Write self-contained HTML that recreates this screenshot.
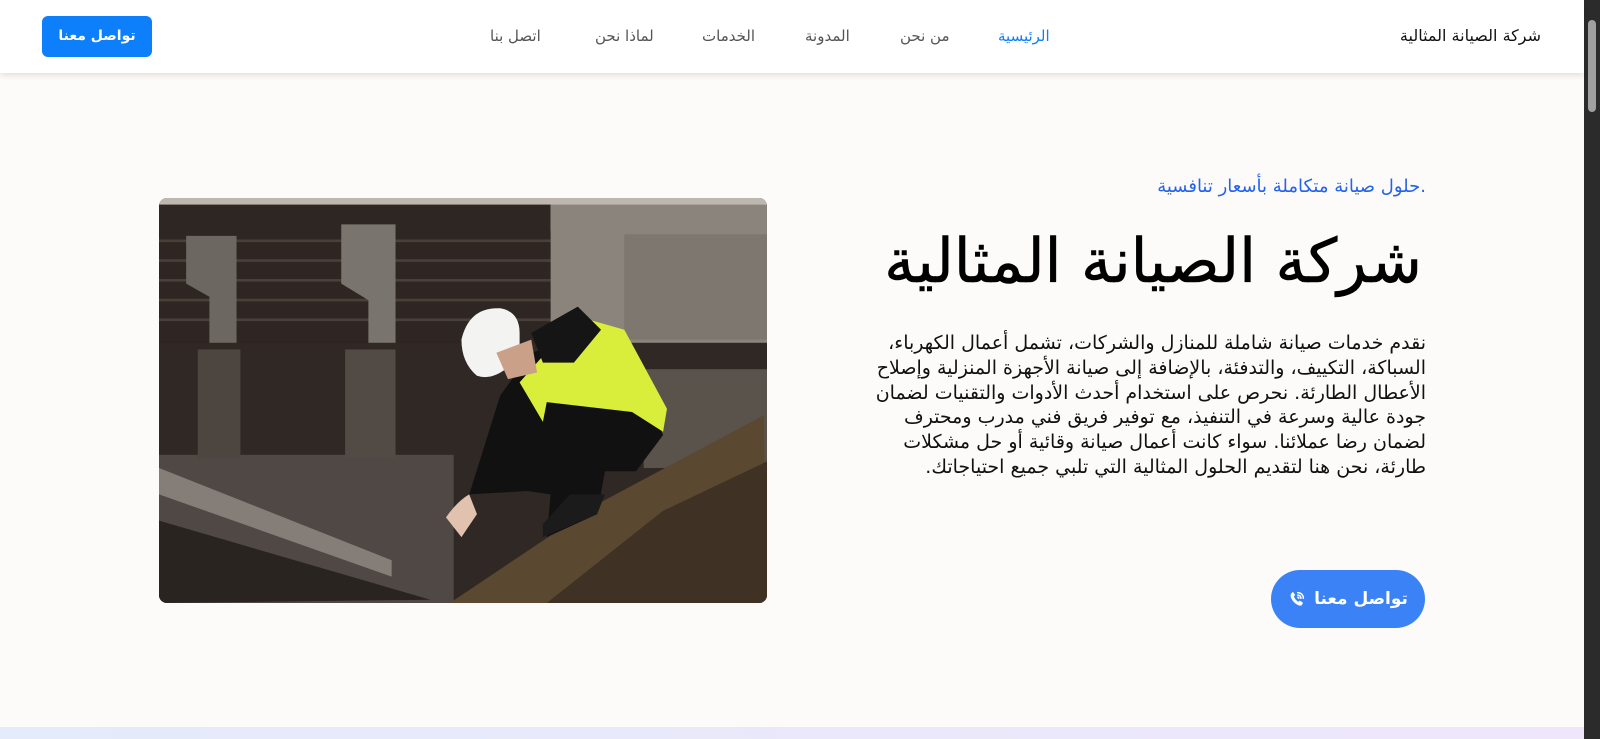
<!DOCTYPE html>
<html dir="rtl"><head><meta charset="utf-8"><style>
*{margin:0;padding:0;box-sizing:border-box}
html,body{width:1600px;height:739px;overflow:hidden}
body{font-family:"DejaVu Sans",sans-serif;background:#fdfbf9;position:relative}
.sb{position:absolute;left:1584px;top:0;width:16px;height:739px;background:#2b2b2b}
.sb i{position:absolute;left:4px;top:20px;width:8px;height:92px;background:#a0a0a0;border-radius:4px}
nav{position:absolute;left:0;top:0;width:1584px;height:73px;background:#fff;box-shadow:0 2px 6px rgba(0,0,0,.12);z-index:2}
.brand{position:absolute;right:43px;top:26px;font-size:16px;color:#111}
.lnk{position:absolute;top:27px;font-size:15px;color:#555;white-space:nowrap}
.nbtn{position:absolute;left:42px;top:16px;width:110px;height:41px;background:#0d7ffb;border-radius:6px;color:#fff;font-size:14px;font-weight:bold;text-align:center;line-height:41px}
.img{position:absolute;left:159px;top:198px;width:608px;height:405px;border-radius:8px;overflow:hidden}
.tag{position:absolute;right:174px;top:176px;color:#2563eb;font-size:18px}
h1{position:absolute;right:178px;top:226px;font-size:61px;font-weight:normal;color:#000;white-space:nowrap;-webkit-text-stroke:0.6px #000}
p{position:absolute;right:174px;top:331px;width:572px;font-size:19px;line-height:24.8px;color:#111;text-align:right}
.cta{position:absolute;left:1271px;top:570px;width:154px;height:58px;border-radius:29px;background:#3b82f6;color:#fff;font-size:17px;font-weight:bold;display:flex;align-items:center;justify-content:center;gap:8px}
.strip{position:absolute;left:0;top:727px;width:1584px;height:12px;background:linear-gradient(90deg,#e4ebfa,#efe6fb)}
</style></head><body>
<nav>
<div class="brand">شركة الصيانة المثالية</div>
<div class="lnk" style="left:998px;color:#0d7ffb">الرئيسية</div>
<div class="lnk" style="left:900px">من نحن</div>
<div class="lnk" style="left:805px">المدونة</div>
<div class="lnk" style="left:702px">الخدمات</div>
<div class="lnk" style="left:595px">لماذا نحن</div>
<div class="lnk" style="left:490px">اتصل بنا</div>
<div class="nbtn">تواصل معنا</div>
</nav>
<div class="img"><svg width="608" height="405" viewBox="0 0 1568 1230" preserveAspectRatio="none">
<rect width="1568" height="1230" fill="#2a2320"/>
<rect x="0" y="0" width="1568" height="100" fill="#bdb7b0"/>
<rect x="0" y="20" width="1010" height="420" fill="#2e2622"/>
<g stroke="#4a403a" stroke-width="8">
<line x1="0" y1="130" x2="1010" y2="130"/><line x1="0" y1="190" x2="1010" y2="190"/><line x1="0" y1="250" x2="1010" y2="250"/><line x1="0" y1="310" x2="1010" y2="310"/><line x1="0" y1="370" x2="1010" y2="370"/></g>
<path d="M70 115 L200 115 L200 440 L130 440 L130 300 L70 260Z" fill="#6d6761"/>
<path d="M470 80 L610 80 L610 440 L540 440 L540 310 L470 260Z" fill="#7a746e"/>
<path d="M1010 20 L1568 20 L1568 440 L1010 440Z" fill="#8a847c"/>
<rect x="1200" y="110" width="368" height="320" fill="#7d776f"/>
<rect x="0" y="440" width="1568" height="790" fill="#2f2824"/>
<rect x="0" y="780" width="760" height="450" fill="#4f4844"/>
<path d="M0 820 L600 1100 L600 1150 L0 900Z" fill="#857e78"/>
<path d="M0 980 L700 1220 L0 1230Z" fill="#2a2420"/>
<rect x="100" y="460" width="110" height="330" fill="#4c4540"/>
<rect x="480" y="460" width="130" height="330" fill="#524b45"/>
<rect x="1250" y="520" width="318" height="300" fill="#5a534c"/>
<path d="M750 1230 L1130 930 L1560 660 L1568 1230Z" fill="#5a4830"/>
<path d="M1000 1230 L1300 950 L1568 800 L1568 1230Z" fill="#3f3224"/>
<path d="M800 900 L880 600 L960 470 L1070 430 L1250 560 L1300 720 L1230 830 L1150 830 L1130 960 L1000 1030 L1010 900 L950 890 Z" fill="#111"/>
<path d="M930 560 L1080 360 L1200 400 L1310 640 L1300 710 L1220 650 L1000 620 L990 680 Z" fill="#d9ee3a"/>
<path d="M960 410 L1080 330 L1140 400 L1070 500 L990 500Z" fill="#151515"/>
<path d="M780 430 Q800 330 880 335 Q930 345 930 410 L930 480 Q870 560 820 540 Q780 500 780 430Z" fill="#f3f3f1"/>
<path d="M870 470 L960 430 L975 530 L900 550Z" fill="#caa088"/>
<path d="M740 970 Q770 920 800 900 L820 960 L780 1030Z" fill="#e0c2ae"/>
<path d="M990 1030 L1130 960 L1150 900 L1060 900 L990 990Z" fill="#1b1b1b"/>
</svg></div>
<div class="tag">.حلول صيانة متكاملة بأسعار تنافسية</div>
<h1>شركة الصيانة المثالية</h1>
<p>نقدم خدمات صيانة شاملة للمنازل والشركات، تشمل أعمال الكهرباء، السباكة، التكييف، والتدفئة، بالإضافة إلى صيانة الأجهزة المنزلية وإصلاح الأعطال الطارئة. نحرص على استخدام أحدث الأدوات والتقنيات لضمان جودة عالية وسرعة في التنفيذ، مع توفير فريق فني مدرب ومحترف لضمان رضا عملائنا. سواء كانت أعمال صيانة وقائية أو حل مشكلات طارئة، نحن هنا لتقديم الحلول المثالية التي تلبي جميع احتياجاتك.</p>
<div class="cta"><span>تواصل معنا</span><svg width="18" height="18" viewBox="0 0 24 24"><path d="M6.6 2.5 L9.5 6.5 L7.8 8.8 Q9.5 12.8 13.6 15.8 L15.8 14.2 L20 17 L18.4 20.4 Q15 22 10 18 Q4.5 13.5 3.5 8.5 Q3 5 6.6 2.5Z" fill="#fff"/><path d="M13 3.5a7.5 7.5 0 0 1 7.5 7.5M13 6.8a4.2 4.2 0 0 1 4.2 4.2M13 9.6a1.4 1.4 0 0 1 1.4 1.4" stroke="#fff" stroke-width="2" fill="none" stroke-linecap="round"/></svg></div>
<div class="strip"></div>
<div class="sb"><i></i></div>
</body></html>
